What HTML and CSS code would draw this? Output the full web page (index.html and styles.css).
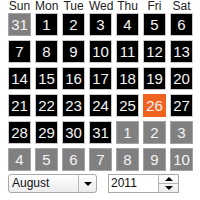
FILE: index.html
```html
<!DOCTYPE html>
<html lang="en">
<head>
    <meta charset="UTF-8">
    <title>Calendar</title>
    <link rel="stylesheet" href="styles.css">
</head>
<body>
    <div class="calendar">
        <div class="weekdays">
            <div>Sun</div><div>Mon</div><div>Tue</div><div>Wed</div><div>Thu</div><div>Fri</div><div>Sat</div>
        </div>
        <div class="days">
            <div class="day other">31</div>
            <div class="day">1</div>
            <div class="day">2</div>
            <div class="day">3</div>
            <div class="day">4</div>
            <div class="day">5</div>
            <div class="day">6</div>

            <div class="day">7</div>
            <div class="day">8</div>
            <div class="day">9</div>
            <div class="day">10</div>
            <div class="day">11</div>
            <div class="day">12</div>
            <div class="day">13</div>

            <div class="day">14</div>
            <div class="day">15</div>
            <div class="day">16</div>
            <div class="day">17</div>
            <div class="day">18</div>
            <div class="day">19</div>
            <div class="day">20</div>

            <div class="day">21</div>
            <div class="day">22</div>
            <div class="day">23</div>
            <div class="day">24</div>
            <div class="day">25</div>
            <div class="day today">26</div>
            <div class="day">27</div>

            <div class="day">28</div>
            <div class="day">29</div>
            <div class="day">30</div>
            <div class="day">31</div>
            <div class="day other">1</div>
            <div class="day other">2</div>
            <div class="day other">3</div>

            <div class="day other">4</div>
            <div class="day other">5</div>
            <div class="day other">6</div>
            <div class="day other">7</div>
            <div class="day other">8</div>
            <div class="day other">9</div>
            <div class="day other">10</div>
        </div>
        <div class="controls">
            <div class="month-select">
                <span class="value">August</span>
                <span class="arrow"><span class="tri-down"></span></span>
            </div>
            <div class="year-spin">
                <span class="value">2011</span>
                <span class="spin">
                    <span class="spin-btn"><span class="tri-up"></span></span>
                    <span class="spin-btn"><span class="tri-down"></span></span>
                </span>
            </div>
        </div>
    </div>
</body>
</html>
```

FILE: styles.css
```css
body {
    margin: 0;
    padding: 0 8px;
    background: #fff;
    font-family: "Liberation Sans", Arial, sans-serif;
}

.calendar {
    width: 185px;
}

.weekdays {
    display: grid;
    grid-template-columns: repeat(7, 23px);
    column-gap: 4px;
    font-size: 12px;
    line-height: 13px;
    color: #222;
    text-align: center;
}

.days {
    display: grid;
    grid-template-columns: repeat(7, 23px);
    grid-auto-rows: 23px;
    gap: 4px;
}

.day {
    box-sizing: border-box;
    border: 1px solid #c9c9c9;
    background: #000;
    color: #f4f4f4;
    font-size: 15px;
    display: flex;
    align-items: center;
    justify-content: center;
}

.day.other {
    background: #808080;
    border-color: #a3a3a3;
}

.day.today {
    background: #f2621f;
    border-color: #f2621f;
}

.controls {
    display: flex;
    align-items: center;
    margin-top: 3px;
}

.month-select, .year-spin {
    box-sizing: border-box;
    height: 19px;
    display: flex;
    align-items: stretch;
    font-size: 12px;
    color: #111;
}

.month-select {
    width: 89px;
    border: 1px solid #a9a9a9;
    border-radius: 3px;
    background: linear-gradient(#fff, #ececec);
}

.month-select .value {
    flex: 1;
    padding-left: 3px;
    line-height: 17px;
}

.month-select .arrow {
    width: 17px;
    border-left: 1px solid #b5b5b5;
    display: flex;
    align-items: center;
    justify-content: center;
}

.year-spin {
    width: 71px;
    margin-left: 11px;
    border: 1px solid #a9a9a9;
    background: #fff;
}

.year-spin .value {
    flex: 1;
    padding-left: 2px;
    line-height: 17px;
}

.spin {
    width: 19px;
    display: flex;
    flex-direction: column;
    border-left: 1px solid #b5b5b5;
    background: linear-gradient(#fff, #ececec);
}

.spin-btn {
    flex: 1;
    display: flex;
    align-items: center;
    justify-content: center;
}

.spin-btn + .spin-btn {
    border-top: 1px solid #b5b5b5;
}

.tri-down, .tri-up {
    width: 0;
    height: 0;
    border-left: 4px solid transparent;
    border-right: 4px solid transparent;
}

.tri-down {
    border-top: 4px solid #000;
}

.tri-up {
    border-bottom: 4px solid #000;
}
```
